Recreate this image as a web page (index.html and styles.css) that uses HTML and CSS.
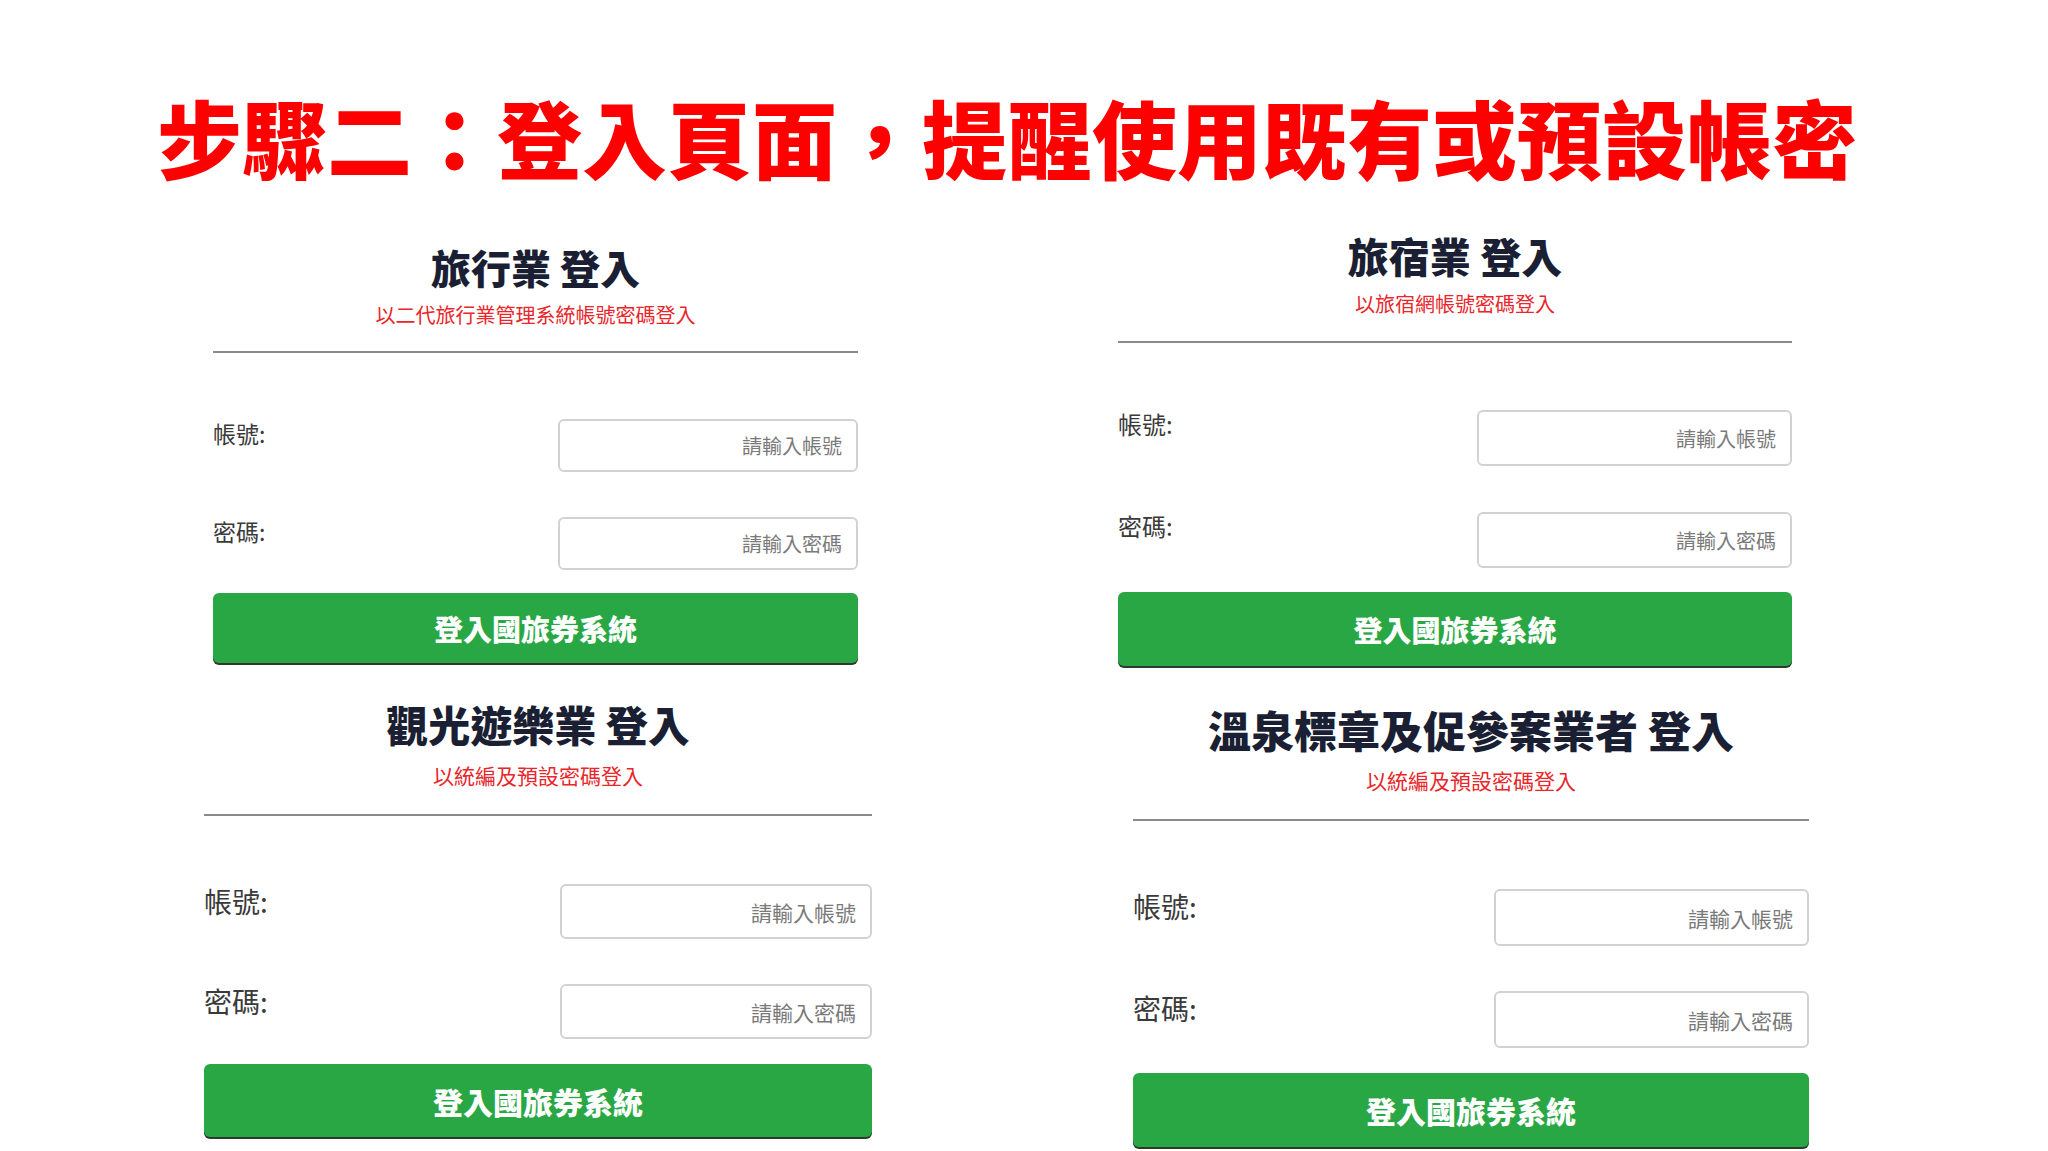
FILE: index.html
```html
<!DOCTYPE html>
<html lang="zh-Hant">
<head>
  <meta charset="UTF-8">
  <title>步驟二：登入頁面</title>
  <link rel="stylesheet" href="styles.css">
</head>
<body>
  <h1 class="slide-title">步驟二：登入頁面，提醒使用既有或預設帳密</h1>

  <div class="row row-top">
    <div class="login travel">
      <h2>旅行業 登入</h2>
      <p class="hint">以二代旅行業管理系統帳號密碼登入</p>
      <hr class="divider">
      <div class="field">
        <label>帳號:</label>
        <input type="text" placeholder="請輸入帳號">
      </div>
      <div class="field">
        <label>密碼:</label>
        <input type="password" placeholder="請輸入密碼">
      </div>
      <button>登入國旅券系統</button>
    </div>

    <div class="login hotel">
      <h2>旅宿業 登入</h2>
      <p class="hint">以旅宿網帳號密碼登入</p>
      <hr class="divider">
      <div class="field">
        <label>帳號:</label>
        <input type="text" placeholder="請輸入帳號">
      </div>
      <div class="field">
        <label>密碼:</label>
        <input type="password" placeholder="請輸入密碼">
      </div>
      <button>登入國旅券系統</button>
    </div>
  </div>

  <div class="row row-bottom">
    <div class="login tourism">
      <h2>觀光遊樂業 登入</h2>
      <p class="hint">以統編及預設密碼登入</p>
      <hr class="divider">
      <div class="field">
        <label>帳號:</label>
        <input type="text" placeholder="請輸入帳號">
      </div>
      <div class="field">
        <label>密碼:</label>
        <input type="password" placeholder="請輸入密碼">
      </div>
      <button>登入國旅券系統</button>
    </div>

    <div class="login hotspring">
      <h2>溫泉標章及促參案業者 登入</h2>
      <p class="hint">以統編及預設密碼登入</p>
      <hr class="divider">
      <div class="field">
        <label>帳號:</label>
        <input type="text" placeholder="請輸入帳號">
      </div>
      <div class="field">
        <label>密碼:</label>
        <input type="password" placeholder="請輸入密碼">
      </div>
      <button>登入國旅券系統</button>
    </div>
  </div>
</body>
</html>
```

FILE: styles.css
```css
body {
  margin: 0;
  background: #fff;
  font-family: "Noto Sans CJK TC", "Noto Sans", sans-serif;
  width: 2048px;
  height: 1151px;
  overflow: hidden;
}

.slide-title {
  margin: 0;
  padding: 93px 34px 0 0;
  font-size: 85px;
  line-height: 85px;
  font-weight: 900;
  color: #ff0000;
  text-align: center;
  letter-spacing: 0;
}

.row {
  display: flex;
  align-items: flex-start;
}

.row-top {
  margin-top: 53px;
}

.row-bottom {
  margin-top: 33px;
}

/* one login panel */
.login {
  display: flex;
  flex-direction: column;
  --head: 40px;
  --sub: 20px;
  --label: 23px;
  --label-lh: 28px;
  --input-w: 300px;
  --input-h: 53px;
  --btn-h: 70px;
  --btn-font: 29px;
}

.login h2 {
  margin: 0;
  font-size: var(--head);
  line-height: 48px;
  font-weight: 900;
  color: #1b1f33;
  text-align: center;
}

.hint {
  margin: 10px 0 0;
  font-size: var(--sub);
  line-height: 28px;
  color: #e8262b;
  text-align: center;
}

.divider {
  margin: 22px 0 0;
  border: none;
  height: 2px;
  background: #8a8a8a;
}

.field {
  display: flex;
  justify-content: space-between;
  align-items: flex-start;
  margin-top: 45px;
}

.divider + .field {
  margin-top: 66px;
}

.field label {
  font-size: var(--label);
  line-height: var(--label-lh);
  color: #3a3a3a;
}

.field input {
  width: var(--input-w);
  height: var(--input-h);
  box-sizing: border-box;
  border: 2px solid #d2d2d2;
  border-radius: 6px;
  padding: 0 14px;
  text-align: right;
  font-family: inherit;
  font-size: var(--sub);
  background: #fff;
}

.field input::placeholder {
  color: #7a7a7a;
}

.login button {
  margin-top: 23px;
  height: var(--btn-h);
  border: none;
  border-radius: 6px;
  background: #29a745;
  box-shadow: 0 2px 0 #2e3a30;
  color: #fff;
  font-family: inherit;
  font-size: var(--btn-font);
  font-weight: 900;
}

/* per-panel sizes, as captured */
.travel {
  width: 645px;
  margin-left: 213px;
  padding-top: 12px;
}

.hotel {
  width: 674px;
  margin-left: 260px;
  --head: 41px;
  --label: 24px;
  --input-w: 315px;
  --input-h: 56px;
  --btn-h: 74px;
}

.hotel .hint { margin-top: 11px; }
.hotel .divider { margin-top: 23px; }
.hotel .divider + .field { margin-top: 67px; }
.hotel .field + .field { margin-top: 46px; }
.hotel button { margin-top: 24px; }

.tourism {
  width: 668px;
  margin-left: 204px;
  --head: 42px;
  --sub: 21px;
  --label: 28px;
  --label-lh: 34px;
  --input-w: 312px;
  --input-h: 55px;
  --btn-h: 73px;
  --btn-font: 30px;
}

.hotspring {
  width: 676px;
  margin-left: 261px;
  padding-top: 5px;
  --head: 43px;
  --sub: 21px;
  --label: 28px;
  --label-lh: 34px;
  --input-w: 315px;
  --input-h: 57px;
  --btn-h: 74px;
  --btn-font: 30px;
}

.tourism h2,
.hotspring h2 {
  line-height: 50px;
}

.tourism .hint,
.hotspring .hint {
  margin-top: 12px;
}

.tourism .divider,
.hotspring .divider {
  margin-top: 25px;
}

.tourism .divider + .field,
.hotspring .divider + .field {
  margin-top: 68px;
}

.tourism button { margin-top: 25px; }
.hotspring button { margin-top: 25px; }
```
